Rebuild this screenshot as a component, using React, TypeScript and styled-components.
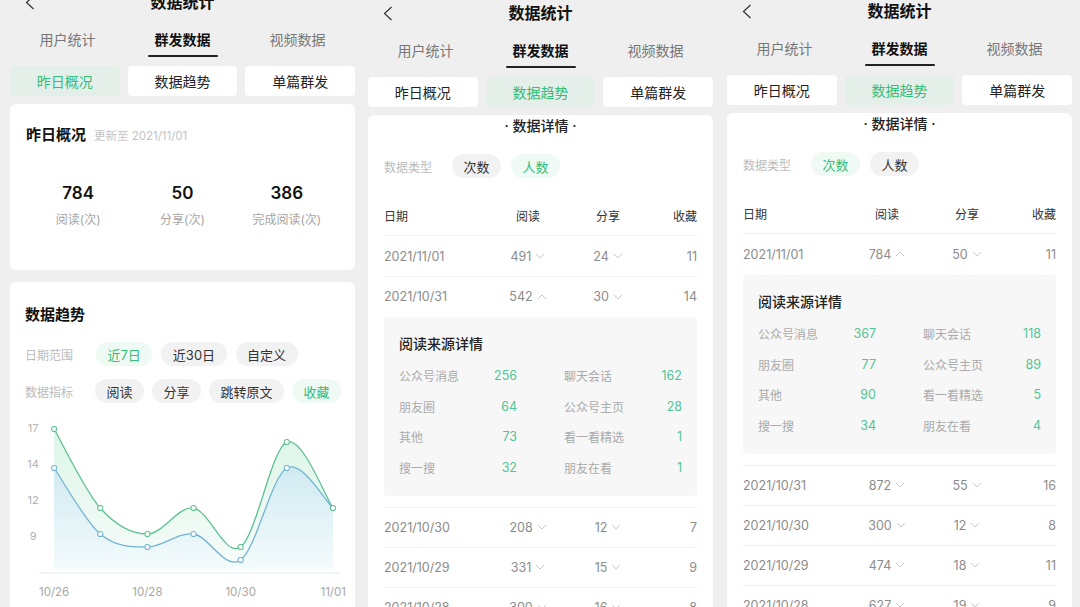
import * as React from 'react';
import styled, { createGlobalStyle } from 'styled-components';

const GREEN = '#36bb78';
const NUM_GREEN = '#52c495';

const GlobalStyle = createGlobalStyle`
  html, body { margin: 0; padding: 0; background: #efefef; }
  body { font-family: "Inter", "Noto Sans CJK SC", sans-serif; color: #222; }
  #root { width: 1080px; height: 607px; overflow: hidden; }
`;

const Screen = styled.div`
  display: flex;
  width: 1080px;
  height: 607px;
  overflow: hidden;
  background: #efefef;
`;

const Phone = styled.section<{ $shift: number }>`
  width: 360px;
  flex: none;
  margin-top: ${p => p.$shift}px;
  display: flex;
  flex-direction: column;
`;

const NavBar = styled.div`
  display: grid;
  grid-template-columns: 60px 1fr 60px;
  align-items: center;
  height: 28px;
`;

const Back = styled.div`
  padding-left: 15px;
  display: flex;
  align-items: center;
`;

const NavTitle = styled.div`
  text-align: center;
  font-size: 16px;
  font-weight: 600;
  line-height: 28px;
  color: #111;
`;

const Tabs = styled.div`
  display: grid;
  grid-template-columns: repeat(3, 1fr);
`;

const Tab = styled.div<{ $active?: boolean }>`
  display: flex;
  flex-direction: column;
  align-items: center;
  padding-top: 14px;
  font-size: 14px;
  line-height: 20px;
  color: ${p => (p.$active ? '#111' : '#777')};
  font-weight: ${p => (p.$active ? 600 : 400)};
  &::after {
    content: '';
    display: block;
    width: 70px;
    height: 2px;
    margin-top: 5px;
    border-radius: 1px;
    background: ${p => (p.$active ? '#222' : 'transparent')};
  }
`;

const Body = styled.div<{ $pl: number; $pr: number }>`
  padding: 0 ${p => p.$pr}px 0 ${p => p.$pl}px;
  display: flex;
  flex-direction: column;
`;

const Segments = styled.div`
  display: grid;
  grid-template-columns: repeat(3, 1fr);
  gap: 8px;
  margin-top: 9px;
`;

const SegButton = styled.div<{ $active?: boolean }>`
  height: 30px;
  border-radius: 4px;
  display: flex;
  align-items: center;
  justify-content: center;
  font-size: 14px;
  background: ${p => (p.$active ? '#e5efe9' : '#fff')};
  color: ${p => (p.$active ? GREEN : '#222')};
`;

const Card = styled.div<{ $gap?: number; $fill?: boolean }>`
  background: #fff;
  border-radius: 6px;
  margin-top: ${p => p.$gap ?? 8}px;
  min-height: ${p => (p.$fill ? '520px' : 'auto')};
`;

/* ---------- panel 1 ---------- */

const OverviewCard = styled(Card)`
  padding: 20px 16px 41px;
`;

const CardTitle = styled.div`
  font-size: 15px;
  font-weight: 600;
  line-height: 22px;
  color: #111;
  display: flex;
  align-items: baseline;
  gap: 8px;
`;

const Updated = styled.span`
  font-size: 11.5px;
  font-weight: 400;
  color: #c4c4c4;
`;

const Stats = styled.div`
  display: grid;
  grid-template-columns: repeat(3, 1fr);
  margin-top: 34px;
`;

const Stat = styled.div`
  display: flex;
  flex-direction: column;
  align-items: center;
`;

const StatValue = styled.div`
  font-size: 17px;
  font-weight: 600;
  line-height: 24px;
  color: #111;
`;

const StatLabel = styled.div`
  margin-top: 6px;
  font-size: 12px;
  line-height: 18px;
  color: #a5a5a5;
`;

const TrendCard = styled(Card)`
  padding: 22px 0 0;
`;

const TrendTitle = styled(CardTitle)`
  padding: 0 15px;
`;

const FilterRow = styled.div<{ $gap: number; $pad?: number }>`
  display: flex;
  align-items: center;
  margin-top: ${p => p.$gap}px;
  padding-left: ${p => p.$pad ?? 15}px;
`;

const FilterLabel = styled.div<{ $w: number }>`
  width: ${p => p.$w}px;
  flex: none;
  font-size: 12px;
  color: #bbb;
`;

const Chips = styled.div<{ $gap: number }>`
  display: flex;
  gap: ${p => p.$gap}px;
`;

const Chip = styled.div<{ $active?: boolean }>`
  height: 24px;
  padding: 0 11.5px;
  border-radius: 12px;
  display: flex;
  align-items: center;
  font-size: 13px;
  background: ${p => (p.$active ? '#f0faf4' : '#f2f2f2')};
  color: ${p => (p.$active ? GREEN : '#333')};
`;

const ChartBox = styled.div`
  margin-top: 15px;
  height: 190px;
`;

const xs = [44, 90, 137, 183, 230, 276, 322];
const greenY = [11, 90, 116, 90, 129, 24, 90];
const blueY = [50, 116, 129, 116, 142, 50, 90];
const BOTTOM = 151;

function curve(ys: number[]) {
  const pts = xs.map((x, i) => [x, ys[i]]);
  let d = `M${pts[0][0]},${pts[0][1]}`;
  for (let i = 0; i < pts.length - 1; i++) {
    const p0 = pts[i - 1] || pts[i];
    const p1 = pts[i];
    const p2 = pts[i + 1];
    const p3 = pts[i + 2] || p2;
    const c1x = p1[0] + (p2[0] - p0[0]) / 6;
    const c1y = p1[1] + (p2[1] - p0[1]) / 6;
    const c2x = p2[0] - (p3[0] - p1[0]) / 6;
    const c2y = p2[1] - (p3[1] - p1[1]) / 6;
    d += ` C${c1x.toFixed(1)},${c1y.toFixed(1)} ${c2x.toFixed(1)},${c2y.toFixed(1)} ${p2[0]},${p2[1]}`;
  }
  return d;
}

function area(ys: number[]) {
  return `${curve(ys)} L${xs[xs.length - 1]},${BOTTOM} L${xs[0]},${BOTTOM} Z`;
}

const TrendChart = () => (
  <ChartBox>
    <svg width="100%" height="190" viewBox="0 0 344 190" preserveAspectRatio="none">
      <defs>
        <linearGradient id="gFill" x1="0" y1="0" x2="0" y2="1">
          <stop offset="0" stopColor="#dcf5e8" />
          <stop offset="1" stopColor="#f7fcfa" />
        </linearGradient>
        <linearGradient id="bFill" x1="0" y1="0" x2="0" y2="1">
          <stop offset="0" stopColor="#d0eaf1" />
          <stop offset="1" stopColor="#f4fbfc" />
        </linearGradient>
      </defs>
      {[
        ['17', 11],
        ['14', 47],
        ['12', 83],
        ['9', 119],
      ].map(([t, y]) => (
        <text key={t} x="23" y={y} textAnchor="middle" dominantBaseline="middle" fontSize="11" fill="#b3b3b3">
          {t}
        </text>
      ))}
      <path d={area(greenY)} fill="url(#gFill)" />
      <path d={area(blueY)} fill="url(#bFill)" />
      <line x1="29" y1="155" x2="329" y2="155" stroke="#e3ecef" strokeWidth="1" />
      <path d={curve(greenY)} fill="none" stroke="#5bc190" strokeWidth="1.3" />
      <path d={curve(blueY)} fill="none" stroke="#72b4d4" strokeWidth="1.3" />
      {xs.map((x, i) => (
        <circle key={'g' + i} cx={x} cy={greenY[i]} r="2.6" fill="#fff" stroke="#5bc190" strokeWidth="1" />
      ))}
      {xs.map((x, i) =>
        i === xs.length - 1 ? null : (
          <circle key={'b' + i} cx={x} cy={blueY[i]} r="2.6" fill="#fff" stroke="#72b4d4" strokeWidth="1" />
        ),
      )}
      {[
        ['10/26', 44, 'middle'],
        ['10/28', 137, 'middle'],
        ['10/30', 230, 'middle'],
        ['11/01', 335, 'end'],
      ].map(([t, x, a]) => (
        <text key={t as string} x={x as number} y="175" textAnchor={a as 'middle' | 'end'} dominantBaseline="middle" fontSize="11.5" fill="#a8a8a8">
          {t}
        </text>
      ))}
    </svg>
  </ChartBox>
);

/* ---------- panels 2 & 3 ---------- */

const DetailCard = styled(Card)`
  padding: 0 16px;
`;

const DetailTitle = styled.div`
  text-align: center;
  font-size: 14px;
  font-weight: 500;
  line-height: 22px;
  color: #222;
`;

const TableRow = styled.div<{ $head?: boolean; $first?: boolean }>`
  display: grid;
  grid-template-columns: 104px 80px 80px 1fr;
  align-items: center;
  height: 40px;
  font-size: ${p => (p.$head ? 12 : 12.5)}px;
  color: ${p => (p.$head ? '#333' : '#8c8c8c')};
  border-top: ${p => (p.$head || p.$first ? 'none' : '1px solid #f1f1f1')};
  border-bottom: ${p => (p.$head ? '1px solid #f1f1f1' : 'none')};
  margin-top: ${p => (p.$head ? 18 : 0)}px;
  box-sizing: border-box;
`;

const Mid = styled.div`
  display: flex;
  align-items: center;
  justify-content: center;
  gap: 4px;
`;

const Right = styled.div`
  text-align: right;
`;

const SourceBox = styled.div`
  background: #f7f7f7;
  border-radius: 4px;
  padding: 16px 15px 13px;
  margin: 1px 0 11px;
`;

const SourceTitle = styled.div`
  font-size: 14px;
  line-height: 22px;
  font-weight: 500;
  color: #222;
  margin-bottom: 5px;
`;

const SourceGrid = styled.div`
  display: grid;
  grid-template-columns: 1fr 1fr;
  column-gap: 47px;
`;

const SourceItem = styled.div`
  display: flex;
  justify-content: space-between;
  align-items: center;
  height: 30.7px;
  font-size: 12px;
  color: #aaa;
`;

const SourceNum = styled.span`
  color: ${NUM_GREEN};
  font-size: 12.5px;
`;

const Chevron = ({ up }: { up?: boolean }) => (
  <svg width="10" height="6" viewBox="0 0 10 6">
    <polyline points={up ? '1,5 5,1 9,5' : '1,1 5,5 9,1'} fill="none" stroke="#c8c8c8" strokeWidth="1" />
  </svg>
);

const BackIcon = () => (
  <svg width="10" height="15" viewBox="0 0 10 15">
    <polyline points="8.5,1 1.5,7.5 8.5,14" fill="none" stroke="#333" strokeWidth="1.2" />
  </svg>
);

type DayRow = {
  date: string;
  read: string;
  share: string;
  fav: string;
  open?: boolean;
  sources?: [string, string][];
};

const sourceNames = ['公众号消息', '聊天会话', '朋友圈', '公众号主页', '其他', '看一看精选', '搜一搜', '朋友在看'];

const panel2Rows: DayRow[] = [
  { date: '2021/11/01', read: '491', share: '24', fav: '11' },
  { date: '2021/10/31', read: '542', share: '30', fav: '14', open: true,
    sources: ['256', '162', '64', '28', '73', '1', '32', '1'].map((v, i) => [sourceNames[i], v] as [string, string]) },
  { date: '2021/10/30', read: '208', share: '12', fav: '7' },
  { date: '2021/10/29', read: '331', share: '15', fav: '9' },
  { date: '2021/10/28', read: '300', share: '16', fav: '8' },
];

const panel3Rows: DayRow[] = [
  { date: '2021/11/01', read: '784', share: '50', fav: '11', open: true,
    sources: ['367', '118', '77', '89', '90', '5', '34', '4'].map((v, i) => [sourceNames[i], v] as [string, string]) },
  { date: '2021/10/31', read: '872', share: '55', fav: '16' },
  { date: '2021/10/30', read: '300', share: '12', fav: '8' },
  { date: '2021/10/29', read: '474', share: '18', fav: '11' },
  { date: '2021/10/28', read: '627', share: '19', fav: '9' },
];

const Header = ({ active }: { active: number }) => (
  <>
    <NavBar>
      <Back>
        <BackIcon />
      </Back>
      <NavTitle>数据统计</NavTitle>
      <div />
    </NavBar>
    <Tabs>
      <Tab>用户统计</Tab>
      <Tab $active>群发数据</Tab>
      <Tab>视频数据</Tab>
    </Tabs>
    <Segments>
      {['昨日概况', '数据趋势', '单篇群发'].map((t, i) => (
        <SegButton key={t} $active={i === active}>
          {t}
        </SegButton>
      ))}
    </Segments>
  </>
);

const DetailPanel = ({ rows, type }: { rows: DayRow[]; type: number }) => (
  <DetailCard $fill>
    <DetailTitle>· 数据详情 ·</DetailTitle>
    <FilterRow $gap={17} $pad={0}>
      <FilterLabel $w={68}>数据类型</FilterLabel>
      <Chips $gap={10}>
        <Chip $active={type === 0}>次数</Chip>
        <Chip $active={type === 1}>人数</Chip>
      </Chips>
    </FilterRow>
    <TableRow $head>
      <div>日期</div>
      <Mid>阅读</Mid>
      <Mid>分享</Mid>
      <Right>收藏</Right>
    </TableRow>
    {rows.map((r, i) => (
      <React.Fragment key={r.date}>
        <TableRow $first={i === 0}>
          <div>{r.date}</div>
          <Mid>
            {r.read}
            <Chevron up={r.open} />
          </Mid>
          <Mid>
            {r.share}
            <Chevron />
          </Mid>
          <Right>{r.fav}</Right>
        </TableRow>
        {r.open && r.sources && (
          <SourceBox>
            <SourceTitle>阅读来源详情</SourceTitle>
            <SourceGrid>
              {r.sources.map(([name, v]) => (
                <SourceItem key={name}>
                  <span>{name}</span>
                  <SourceNum>{v}</SourceNum>
                </SourceItem>
              ))}
            </SourceGrid>
          </SourceBox>
        )}
      </React.Fragment>
    ))}
  </DetailCard>
);

export default function App() {
  return (
    <>
      <GlobalStyle />
      <Screen>
        <Phone $shift={-12}>
          <Body $pl={10} $pr={5}>
            <Header active={0} />
            <OverviewCard>
              <CardTitle>
                昨日概况<Updated>更新至 2021/11/01</Updated>
              </CardTitle>
              <Stats>
                <Stat>
                  <StatValue>784</StatValue>
                  <StatLabel>阅读(次)</StatLabel>
                </Stat>
                <Stat>
                  <StatValue>50</StatValue>
                  <StatLabel>分享(次)</StatLabel>
                </Stat>
                <Stat>
                  <StatValue>386</StatValue>
                  <StatLabel>完成阅读(次)</StatLabel>
                </Stat>
              </Stats>
            </OverviewCard>
            <TrendCard $gap={12} $fill>
              <TrendTitle>数据趋势</TrendTitle>
              <FilterRow $gap={16}>
                <FilterLabel $w={71}>日期范围</FilterLabel>
                <Chips $gap={9}>
                  <Chip $active>近7日</Chip>
                  <Chip>近30日</Chip>
                  <Chip>自定义</Chip>
                </Chips>
              </FilterRow>
              <FilterRow $gap={13}>
                <FilterLabel $w={70}>数据指标</FilterLabel>
                <Chips $gap={8}>
                  <Chip>阅读</Chip>
                  <Chip>分享</Chip>
                  <Chip>跳转原文</Chip>
                  <Chip $active>收藏</Chip>
                </Chips>
              </FilterRow>
              <TrendChart />
            </TrendCard>
          </Body>
        </Phone>
        <Phone $shift={-1}>
          <Body $pl={8} $pr={7}>
            <Header active={1} />
            <DetailPanel rows={panel2Rows} type={1} />
          </Body>
        </Phone>
        <Phone $shift={-3}>
          <Body $pl={7} $pr={8}>
            <Header active={1} />
            <DetailPanel rows={panel3Rows} type={0} />
          </Body>
        </Phone>
      </Screen>
    </>
  );
}
